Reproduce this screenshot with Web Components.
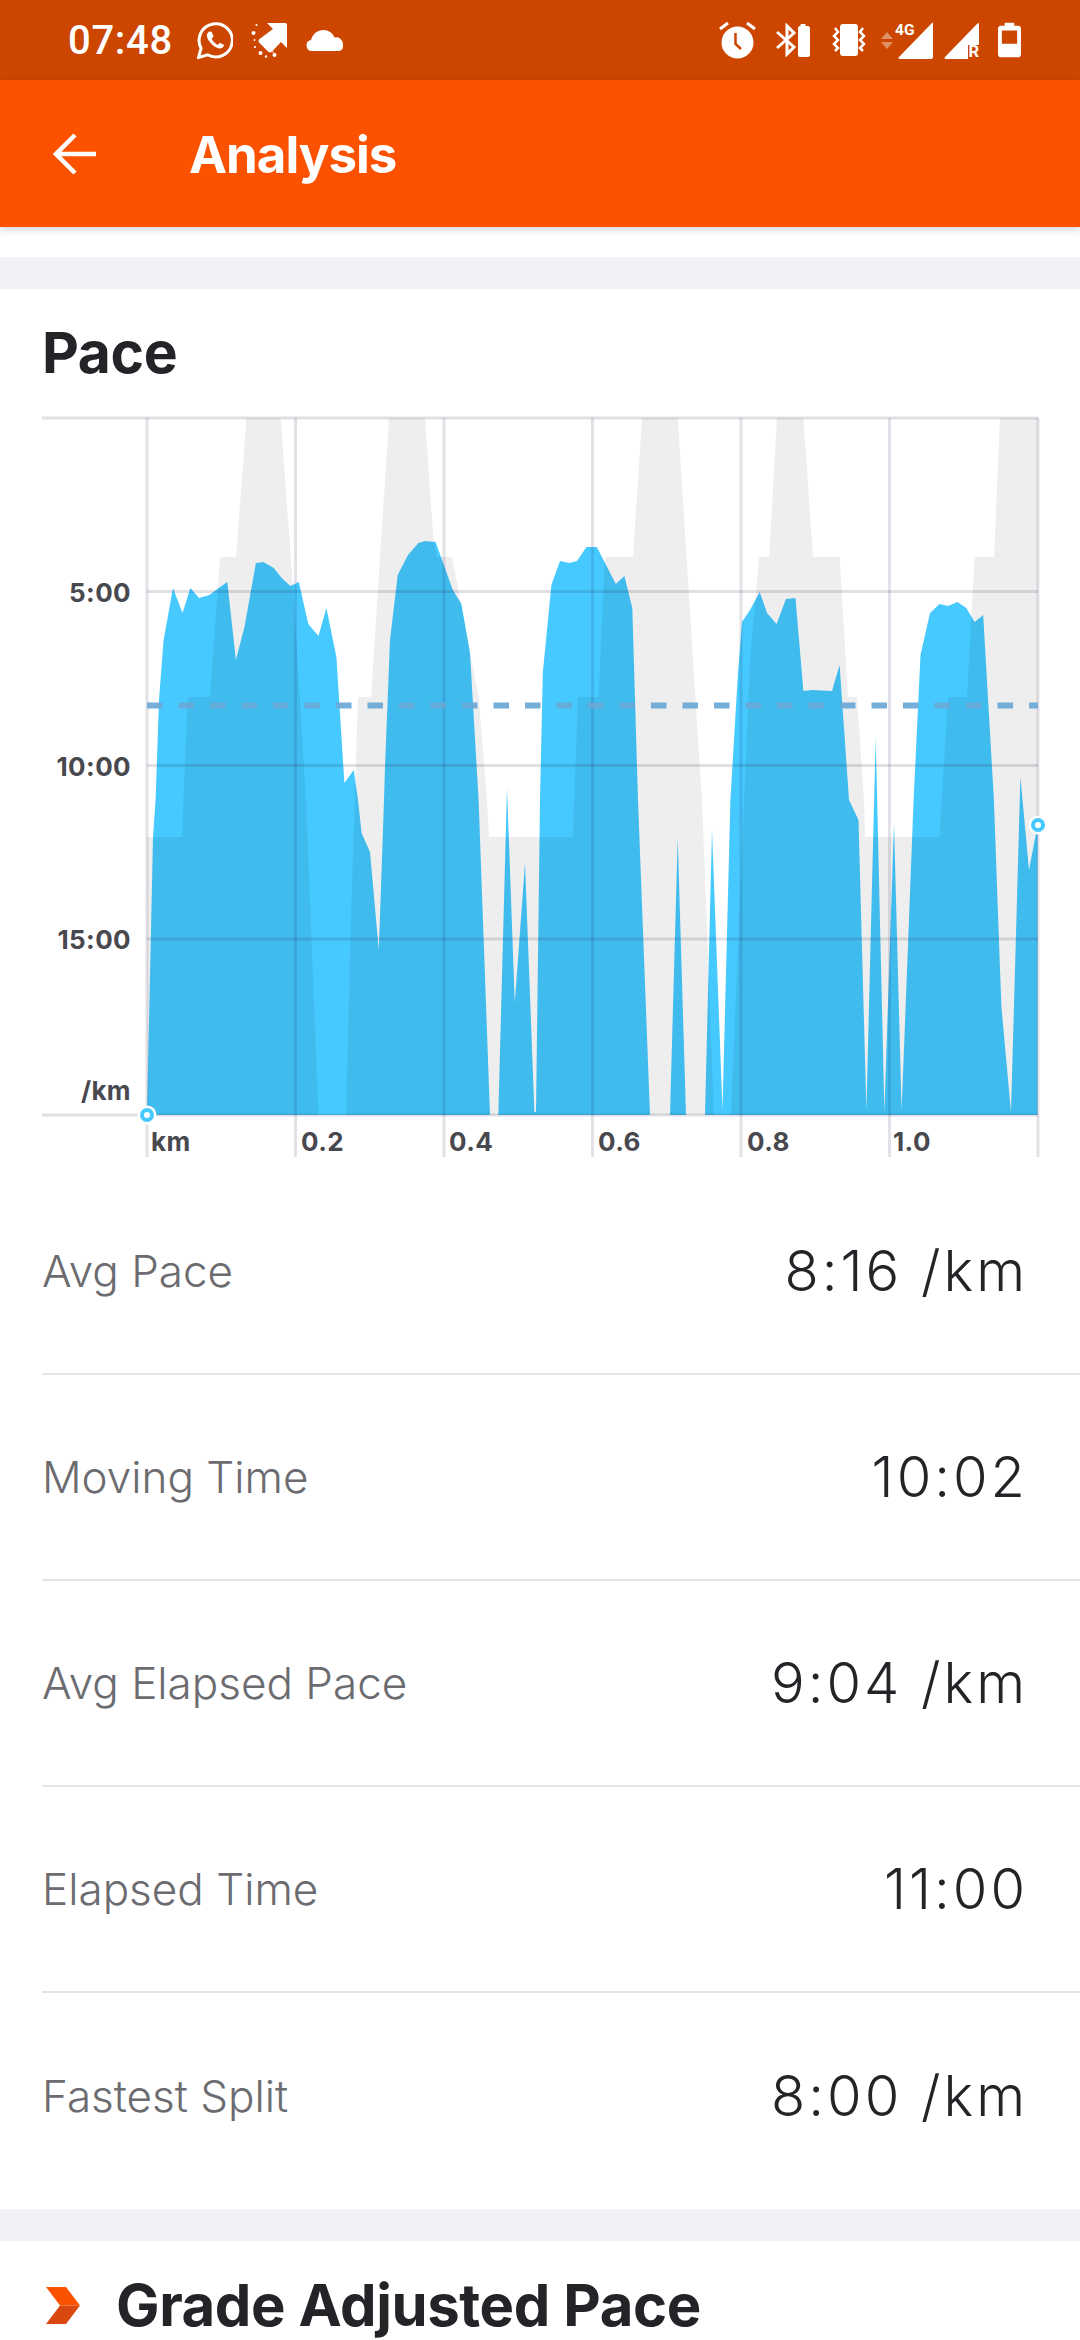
<!DOCTYPE html>
<html lang="en">
<head>
<meta charset="utf-8">
<title>Analysis</title>
<style>
    html, body { margin: 0; padding: 0; background: #fff; height: 2340px; overflow: hidden; font-family: Inter, "Liberation Sans", sans-serif; }
</style>
</head>
<body>
<status-bar></status-bar>
<app-bar>Analysis</app-bar>
<section-gap style="margin-top: 30px"></section-gap>
<pace-chart></pace-chart>
<stat-row label="Avg Pace" value="8:16 /km"></stat-row>
<stat-row label="Moving Time" value="10:02"></stat-row>
<stat-row label="Avg Elapsed Pace" value="9:04 /km"></stat-row>
<stat-row label="Elapsed Time" value="11:00"></stat-row>
<stat-row label="Fastest Split" value="8:00 /km" last></stat-row>
<section-gap></section-gap>
<section-title>Grade Adjusted Pace</section-title>

<script>
class StatusBar extends HTMLElement {
    constructor() {
        super();
        this.attachShadow({ mode: 'open' });
    }

    connectedCallback() {
        this.shadowRoot.innerHTML = `
            <style>
                :host { display: flex; align-items: center; height: 80px; background: #cc4600; color: #fff; padding: 0 59px 0 68px; box-sizing: border-box; font-family: Roboto, sans-serif; }
                .time { font-size: 40px; font-weight: 500; letter-spacing: .7px; width: 129px; flex: none; }
                .left, .right { display: flex; align-items: center; }
                .spacer { flex: 1; }
                svg { display: block; fill: #fff; flex: none; }
                text { font-family: Roboto, sans-serif; font-weight: 700; }
            </style>
            <span class="time">07:48</span>
            <div class="left">
                <svg width="36" height="37" viewBox="0 0 36 37" style="margin-right:18px">
                    <path d="M1.500 35.500l2.600-9.300A16.600 16.600 0 1 1 10.600 32.800z" fill="none" stroke="#fff" stroke-width="3"/>
                    <path d="M12.500 9.500c-1 .2-2.600 2-2.600 4.300 0 4.200 6.700 11.800 12.200 12.700 2.500.3 4.800-1.500 5-3.400l-4.200-2.300-2.200 2.100c-2.500-1-5.200-3.700-6-6.300l1.900-2.100-1.900-4.800z"/>
                </svg>
                <svg width="36" height="37" viewBox="0 0 36 37" style="margin-right:19px">
                    <path d="M16 1H34.500Q36 1 36 2.500V26L30 20 21 29.500Q19 31.500 17 29.500L8.500 21Q6.500 19 8.500 17L22 7z"/>
                    <g>
                        <circle cx="5.500" cy="3" r="1"/><circle cx="2.500" cy="11" r="2"/><circle cx="3.500" cy="18" r="1"/>
                        <circle cx="4" cy="25" r="1.100"/><circle cx="9.500" cy="31" r="2"/><circle cx="15" cy="34.500" r="1.200"/>
                        <circle cx="23.500" cy="33" r="2"/><circle cx="22" cy="30" r=".8"/>
                    </g>
                </svg>
                <svg width="37" height="21" viewBox="0 0 37 21">
                    <path d="M6 21a5.500 5.500 0 0 1-1-10.900C6.500 4 11.500 0 17.500 0c5 0 9 2.800 11 7.400A6.900 6.900 0 0 1 37 14v2.500c0 2.800-2 4.500-4.500 4.500z"/>
                </svg>
            </div>
            <div class="spacer"></div>
            <div class="right">
                <svg width="37" height="38" viewBox="0 0 37 38" style="margin-right:20px">
                    <path d="M1 8l8-6" stroke="#fff" stroke-width="3" fill="none"/><path d="M36 8l-8-6" stroke="#fff" stroke-width="3" fill="none"/>
                    <circle cx="18.500" cy="21.500" r="16"/>
                    <path d="M16.500 12v11l5.500 5" fill="none" stroke="#cc4600" stroke-width="2.500"/>
                </svg>
                <svg width="34" height="34" viewBox="0 0 34 34" style="margin-right:22px">
                    <path d="M1 9l17 15-7 7V3l7 7L1 25" fill="none" stroke="#fff" stroke-width="3"/>
                    <path d="M22 5c0-1 .7-2 2-2h.5V1h5v2h2.500c1 0 2 1 2 2v27c0 1-1 2-2 2h-8c-1.500 0-2-1-2-2z"/>
                </svg>
                <svg width="34" height="32" viewBox="0 0 34 32" style="margin-right:15px">
                    <rect x="8" y="0" width="18" height="32" rx="3"/>
                    <path d="M3 4l3 4-4 4 4 4-4 4 4 4-3 3M31 4l-3 4 4 4-4 4 4 4-4 4 3 3" fill="none" stroke="#fff" stroke-width="2.500"/>
                </svg>
                <svg width="12" height="17" viewBox="0 0 12 17" style="margin-right:2px;opacity:.4">
                    <path d="M6 0l6 7H0zM0 10h12l-6 7z"/>
                </svg>
                <svg width="38" height="38" viewBox="0 0 38 38" style="margin-right:11px">
                    <path d="M38 2v34c0 1-1 2-2 2H5c-1.500 0-2-1-1-2L36 3c1-1 2-2 2-1z"/>
                    <text x="0" y="14" font-size="15.500" fill="#fff">4G</text>
                </svg>
                <svg width="38" height="44" viewBox="0 -3 38 44" style="margin-right:16px">
                    <path d="M35 2v22H24v14H2c-1.500 0-2-1-1-2L33 3c1-1 2-1 2-1z"/>
                    <text x="24.500" y="36" font-size="16.500" fill="#fff">R</text>
                </svg>
                <svg width="23" height="36" viewBox="0 0 24 36">
                    <path fill-rule="evenodd" d="M7 0h10v3h4c1.600 0 3 1.400 3 3v27c0 1.600-1.400 3-3 3H3c-1.600 0-3-1.400-3-3V6c0-1.600 1.400-3 3-3h4zM4 8v14h16V8z"/>
                </svg>
            </div>
        `;
    }
}

class AppBar extends HTMLElement {
    constructor() {
        super();
        this.attachShadow({ mode: 'open' });
    }

    connectedCallback() {
        this.shadowRoot.innerHTML = `
            <style>
                :host { display: flex; align-items: center; height: 147px; background: #fc5200; color: #fff; padding-left: 53px; box-sizing: border-box; box-shadow: 0 3px 8px rgba(0,0,0,.16); position: relative; }
                svg { display: block; width: 43px; height: 42px; margin-right: 93px; }
                .title { font-size: 51px; font-weight: 700; letter-spacing: -1px; padding-top: 2px; }
            </style>
            <svg viewBox="0 0 43 42"><path d="M43 21H3M22 2L3 21l19 19" fill="none" stroke="#fff" stroke-width="4.500"/></svg>
            <span class="title"><slot></slot></span>
        `;
    }
}

class SectionGap extends HTMLElement {
    constructor() {
        super();
        this.attachShadow({ mode: 'open' });
    }

    connectedCallback() {
        this.shadowRoot.innerHTML = `<style>:host { display: block; height: 32px; background: #f2f2f6; }</style>`;
    }
}

class PaceChart extends HTMLElement {
    constructor() {
        super();
        this.attachShadow({ mode: 'open' });
    }

    // coordinates are page pixels, the viewBox below maps them in
    get grey() {
        return [[147,1115],[147,837],[182,837],[187.7,697],[210,697],[220,557],[236,557],[246.5,418],[280.6,418],[293,587],[306,800],[318.5,1115],
            [346,1115],[351,917],[358,697],[371,697],[389,418],[425,418],[433,533],[437,557],[452,557],[478.6,697],[487,800],[489,837],
            [572.7,837],[578,697],[598.5,697],[605,557],[633,557],[642,418],[677.7,418],[702,800],[714,1115],[731,1115],[750,660],[759,557],
            [769,557],[777,418],[803.4,418],[813,557],[839.6,557],[848,697],[857,697],[864,800],[865,837],[939.4,837],[948,697],[967,697],
            [974.6,557],[994,557],[1000,418],[1038,418],[1038,1115]];
    }

    get blue() {
        return [[147,1115],[153,837],[155.6,800],[159,700],[163.6,640],[173,588],[182.5,613],[190.4,588],[199,598],[209.4,595],[218.7,588],[227.3,582],
            [235.9,660],[244.5,627],[255.9,563],[263.4,562],[273.8,568],[281.7,578],[290.3,586],[298.9,582],[308.2,624],[318.5,636],[326.4,608],[336.4,657],
            [344.4,783],[353.7,770],[358,800],[361.6,833],[370,852],[378.8,950],[384,800],[385,767],[390,640],[397.7,575],[408,555],[418.4,543],[425.3,541],
            [435.6,542],[452.8,590],[461.4,604],[470,653],[478.6,800],[490,1115],[498.3,1115],[507,788],[514.8,1003],[525,863],[534.4,1112],[536,1112],[540,800],
            [542.8,673],[551.4,585],[560,561],[569.3,563],[577,561],[586.5,547],[596.8,547],[615.8,584],[624.4,576],[632.3,608],[638,800],[650,1115],[670,1115],
            [677.7,838],[686,1115],[705,1115],[712,830],[722.5,1110],[730.4,800],[738,673],[742,622],[750,610],[759.7,592],[767,613],[776.6,624],[786,599],
            [795.5,598],[803.4,691],[812,690],[832,691],[839.6,665],[849,800],[858.5,820],[866.4,1110],[875.7,737],[884.4,1112],[894,823],[901.6,1110],
            [913.6,800],[920.5,655],[930,613],[939.5,604],[948,606],[957.4,602],[966.3,608],[974.6,622],[983.2,615],[993.9,800],[1001.4,1007],[1011,1112],
            [1020.4,777],[1029,870],[1037.6,825],[1037.6,1115]];
    }

    connectedCallback() {
        const pts = (list) => list.map((p) => p.join(',')).join(' ');
        const vLines = [147, 295.5, 444, 592.5, 741, 889.5, 1038];
        const hLines = [[591.5, 147], [765.5, 147], [939, 147], [1115, 42]];
        const yLabels = [['5:00', 592], ['10:00', 766], ['15:00', 939], ['/km', 1090]];
        const xLabels = [['km', 151], ['0.2', 301], ['0.4', 449], ['0.6', 598], ['0.8', 747], ['1.0', 893]];

        this.shadowRoot.innerHTML = `
            <style>
                :host { display: block; background: #fff; font-family: Inter, sans-serif; }
                h2 { margin: 0; height: 121px; box-sizing: border-box; padding: 32px 0 0 42px; font-size: 57px; line-height: 64px; font-weight: 700; color: #242428; letter-spacing: -.4px; }
                svg { display: block; }
                text { font-family: Inter, sans-serif; font-weight: 700; font-size: 26px; letter-spacing: .4px; fill: #48484f; dominant-baseline: central; }
            </style>
            <h2>Pace</h2>
            <svg width="1080" height="759" viewBox="0 410 1080 759">
                <polygon points="${pts(this.blue)}" fill="#45c9ff"/>
                <polygon points="${pts(this.grey)}" fill="#000" fill-opacity=".067"/>
                <rect x="42" y="416.500" width="996" height="3" fill="#22224a" fill-opacity=".14"/>
                ${hLines.map(([y, x]) => `<rect x="${x}" y="${y - 1.5}" width="${1038 - x}" height="3" fill="#22224a" fill-opacity=".14"/>`).join('')}
                ${vLines.map((x) => `<rect x="${x - 1.5}" y="418" width="3" height="739" fill="#22224a" fill-opacity=".13"/>`).join('')}
                <line x1="147" y1="705.500" x2="1038" y2="705.500" stroke="#69a8d6" stroke-opacity=".92" stroke-width="6" stroke-dasharray="15.500 16"/>
                <circle cx="147" cy="1115" r="9.500" fill="#fff"/>
                <circle cx="147" cy="1115" r="5" fill="#fff" stroke="#45c9ff" stroke-width="4"/>
                <circle cx="1038" cy="825" r="9.500" fill="#fff"/>
                <circle cx="1038" cy="825" r="5" fill="#fff" stroke="#45c9ff" stroke-width="4"/>
                ${yLabels.map(([t, y]) => `<text x="131" y="${y}" text-anchor="end">${t}</text>`).join('')}
                ${xLabels.map(([t, x]) => `<text x="${x}" y="1141">${t}</text>`).join('')}
            </svg>
        `;
    }
}

class StatRow extends HTMLElement {
    constructor() {
        super();
        this.attachShadow({ mode: 'open' });
    }

    connectedCallback() {
        const last = this.hasAttribute('last');
        this.shadowRoot.innerHTML = `
            <style>
                :host { display: flex; align-items: center; justify-content: space-between; height: 206px; box-sizing: border-box; margin-left: 42px; padding: 0 52px 0 0; margin-bottom: ${last ? '10px' : '0'}; border-bottom: ${last ? '0' : '2px solid #e4e4e8'}; font-family: Inter, sans-serif; }
                .label { font-size: 44px; font-weight: 300; color: #6b6b70; }
                .value { font-size: 56px; font-weight: 300; color: #242428; letter-spacing: 3px; }
            </style>
            <span class="label">${this.getAttribute('label')}</span>
            <span class="value">${this.getAttribute('value')}</span>
        `;
    }
}

class SectionTitle extends HTMLElement {
    constructor() {
        super();
        this.attachShadow({ mode: 'open' });
    }

    connectedCallback() {
        this.shadowRoot.innerHTML = `
            <style>
                :host { display: flex; align-items: center; height: 99px; box-sizing: border-box; padding: 29px 0 0 46px; color: #242428; font-family: Inter, sans-serif; }
                svg { display: block; width: 34px; height: 37px; margin-right: 36px; }
                .title { font-size: 58px; font-weight: 700; letter-spacing: -.4px; white-space: nowrap; }
            </style>
            <svg viewBox="0 0 34 37">
                <path d="M0 0h20l14 18.500H14z" fill="#fc5200"/>
                <path d="M14 18.500h20L20 37H0z" fill="#d9480f"/>
            </svg>
            <span class="title"><slot></slot></span>
        `;
    }
}

customElements.define('status-bar', StatusBar);
customElements.define('app-bar', AppBar);
customElements.define('section-gap', SectionGap);
customElements.define('pace-chart', PaceChart);
customElements.define('stat-row', StatRow);
customElements.define('section-title', SectionTitle);
</script>
</body>
</html>
